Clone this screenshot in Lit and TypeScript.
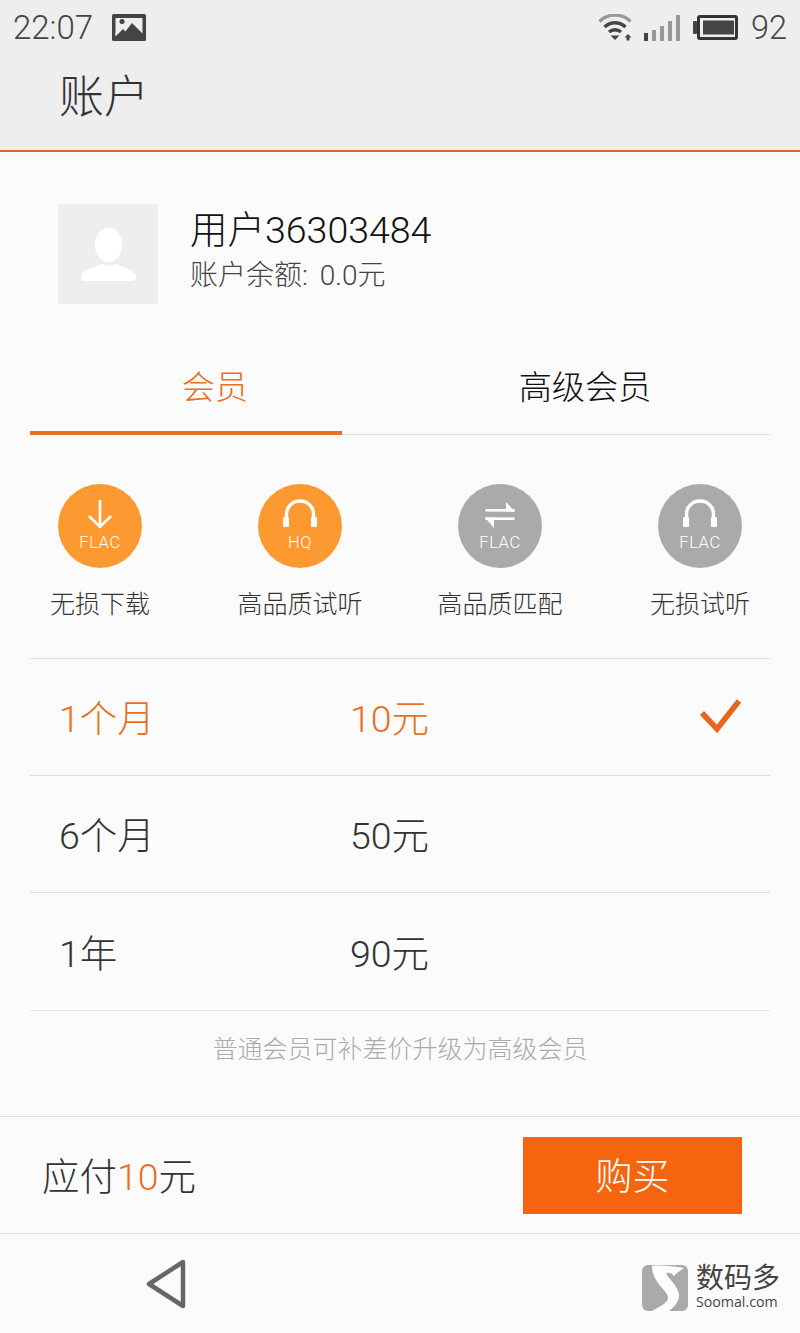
import { LitElement, html, css } from "lit";
import { customElement } from "lit/decorators.js";

const headphones = html`<svg class="glyph" width="36" height="30" viewBox="0 0 36 30">
  <path d="M4.5 22V15a13.5 13 0 0 1 27 0v7" fill="none" stroke="#fff" stroke-width="3.4"/>
  <rect x="1" y="18" width="6" height="10" rx="1" fill="#fff"/>
  <rect x="29" y="18" width="6" height="10" rx="1" fill="#fff"/>
</svg>`;
const arrow = html`<svg class="glyph" width="36" height="30" viewBox="0 0 36 30">
  <path d="M18 1v27M7 17l11 11 11-11" fill="none" stroke="#fff" stroke-width="2.6"/>
</svg>`;
const swap = html`<svg class="glyph" width="36" height="30" viewBox="0 0 36 30">
  <rect x="3.5" y="10" width="29" height="2.6" fill="#fff"/>
  <path d="M24 3l9 9.600h-9z" fill="#fff"/>
  <rect x="3.5" y="18.400" width="29" height="2.6" fill="#fff"/>
  <path d="M12 29L3 18.400h9z" fill="#fff"/>
</svg>`;

const features = [
  { icon: arrow, tag: "FLAC", label: "无损下载", on: true },
  { icon: headphones, tag: "HQ", label: "高品质试听", on: true },
  { icon: swap, tag: "FLAC", label: "高品质匹配", on: false },
  { icon: headphones, tag: "FLAC", label: "无损试听", on: false },
];
const plans = [
  { term: "1个月", price: "10元", on: true },
  { term: "6个月", price: "50元", on: false },
  { term: "1年", price: "90元", on: false },
];

@customElement("app-root")
export class AppRoot extends LitElement {
  static styles = css`
    :host {
      display: flex;
      flex-direction: column;
      width: 800px;
      height: 1333px;
      overflow: hidden;
      background: #fbfbfb;
      color: #333;
      font-family: Roboto, "Noto Sans CJK SC", sans-serif;
      font-weight: 300;
    }
    .top { background: #eeeeee; height: 150px; border-bottom: 2px solid #d9692f; flex: none; }
    .status { height: 52px; box-sizing: border-box; display: flex; align-items: center; padding: 3px 13px 0 13px; }
    .clock { font-size: 33px; color: #444; width: 99px; }
    .spacer { flex: 1; }
    .status svg { display: block; }
    .wifi { margin-right: 11px; }
    .bars { margin-right: 12px; }
    .batt { margin-right: 13px; }
    .level { font-size: 32.5px; color: #444; }
    .title { font-size: 45px; line-height: 50px; padding: 0 0 0 59px; color: #333; margin-top: 21px; }

    .main { flex: 1; padding: 0 30px; }
    .profile { display: flex; align-items: center; padding: 52px 0 0 28px; }
    .avatar { width: 100px; height: 100px; flex: none; margin-right: 32px; display: block; }
    .info { margin-top: -7px; }
    .name { font-size: 37.5px; line-height: 44px; color: #111; }
    .balance { font-size: 28px; line-height: 36px; color: #444; margin-top: 6px; word-spacing: 5px; }

    .tabs { display: grid; grid-template-columns: 1fr 1fr; margin-top: 46px; height: 85px; border-bottom: 1px solid #ddd; box-sizing: border-box; position: relative; }
    .tab { display: flex; align-items: center; justify-content: center; font-size: 33.2px; color: #111; padding-bottom: 15px; }
    .tab.on { color: #e8701f; }
    .tab.on::after { content: ""; position: absolute; left: 0; bottom: -1px; width: 312px; height: 4px; background: #e8701f; }

    .features { display: grid; grid-template-columns: repeat(4, 200px); margin: 49px 0 0 -30px; padding-bottom: 35px; }
    .feature { display: flex; flex-direction: column; align-items: center; }
    .circle { width: 84px; height: 84px; border-radius: 50%; background: #aaaaaa; display: flex; flex-direction: column; align-items: center; padding-top: 15px; box-sizing: border-box; }
    .circle.on { background: #fc9a31; }
    .glyph { display: block; }
    .tag { color: #fff; font-size: 16.5px; line-height: 16px; letter-spacing: 0.6px; margin-top: 6px; }
    .label { font-size: 25px; line-height: 36px; margin-top: 19px; color: #333; white-space: nowrap; }

    .plan { display: flex; align-items: center; height: 117px; box-sizing: border-box; border-top: 1px solid #dedede; padding: 0 0 3px 29px; font-size: 37.5px; color: #333; }
    .plan.last { border-bottom: 1px solid #e6e6e6; height: 119px; }
    .plan.on { color: #e8701f; }
    .term { width: 291px; }
    .plan svg { margin-left: auto; margin-right: 27px; display: block; }
    .note { text-align: center; font-size: 25px; color: #aaa; line-height: 36px; margin-top: 21px; }

    .pay { flex: none; height: 117px; box-sizing: border-box; border-top: 1px solid #ddd; display: flex; align-items: center; justify-content: space-between; padding: 0 58px 0 42px; background: #fbfbfb; }
    .due { font-size: 37.5px; color: #333; margin-top: -3px; }
    .due b { font-weight: 300; color: #e8701f; }
    .buy { width: 219px; height: 77px; background: #f5640f; color: #fff; font-size: 37px; display: flex; align-items: center; justify-content: center; padding-bottom: 2px; box-sizing: border-box; }

    .nav { flex: none; height: 100px; box-sizing: border-box; border-top: 1px solid #ddd; display: flex; background: #fbfbfb; padding: 25px 20px 0 144px; }
    .nav svg { display: block; }
    .brand { margin-left: auto; display: flex; gap: 8px; padding-top: 6px; }
    .brand-text { display: flex; flex-direction: column; }
    .cn { font-size: 28px; line-height: 28px; color: #444; font-weight: 400; }
    .en { font-size: 14.2px; line-height: 16px; color: #444; font-family: "Open Sans", sans-serif; font-weight: 400; margin-top: 1px; }
  `;

  render() {
    return html`
      <div class="top">
        <div class="status">
          <span class="clock">22:07</span>
          <svg width="34" height="27" viewBox="0 0 34 27">
            <rect width="34" height="27" rx="1.500" fill="#444"/>
            <rect x="3.500" y="4" width="27" height="18" fill="#eee"/>
            <circle cx="10" cy="7.500" r="2.500" fill="#444"/>
            <path d="M3 23l8-8 2.400 2.400L20 9l11 11v6H3z" fill="#444"/>
            <path d="M3.500 20l6.500-6" stroke="#eee" stroke-width="1.500"/>
          </svg>
          <span class="spacer"></span>
          <svg class="wifi" width="35" height="28" viewBox="0 0 35 28">
            <path d="M1.500 7.500a22 22 0 0 1 31 0" fill="none" stroke="#999" stroke-width="3.400"/>
            <path d="M6.500 13a15 15 0 0 1 21 0" fill="none" stroke="#444" stroke-width="3.400"/>
            <path d="M11 18a9 9 0 0 1 12 0" fill="none" stroke="#444" stroke-width="3.400"/>
            <path d="M12.500 21.500h9l-4.500 4.500z" fill="#444"/>
            <path d="M30 20l3.500 3.500h-2v3h-3v-3h-2z" fill="#444"/>
          </svg>
          <svg class="bars" width="37" height="26" viewBox="0 0 37 26">
            <rect x="0" y="18" width="4" height="8" fill="#444"/>
            <rect x="8" y="15" width="4" height="11" fill="#999"/>
            <rect x="16" y="11" width="4" height="15" fill="#999"/>
            <rect x="24" y="6" width="4" height="20" fill="#999"/>
            <rect x="32" y="0" width="4" height="26" fill="#999"/>
          </svg>
          <svg class="batt" width="45" height="25" viewBox="0 0 45 25">
            <rect x="0" y="6" width="4" height="13" rx="1" fill="#444"/>
            <rect x="5.500" y="1.500" width="38" height="22" rx="1.500" fill="#eee" stroke="#333" stroke-width="3"/>
            <rect x="10" y="5.500" width="31" height="14" fill="#444"/>
          </svg>
          <span class="level">92</span>
        </div>
        <div class="title">账户</div>
      </div>

      <div class="main">
        <div class="profile">
          <svg class="avatar" viewBox="0 0 100 100">
            <rect width="100" height="100" fill="#eeeeee"/>
            <ellipse cx="50.500" cy="41" rx="13.500" ry="17.500" fill="#fff"/>
            <path d="M23 73c0-7 14-10 20-13l7.500 2 7.500-2c6 3 20 6 20 13 0 3-2 4-4 4H27c-2 0-4-1-4-4z" fill="#fff"/>
          </svg>
          <div class="info">
            <div class="name">用户36303484</div>
            <div class="balance">账户余额: 0.0元</div>
          </div>
        </div>

        <div class="tabs">
          <div class="tab on">会员</div>
          <div class="tab">高级会员</div>
        </div>

        <div class="features">
          ${features.map(
            (f) => html`<div class="feature">
              <div class="circle ${f.on ? "on" : ""}">${f.icon}<span class="tag">${f.tag}</span></div>
              <div class="label">${f.label}</div>
            </div>`
          )}
        </div>

        ${plans.map(
          (p, i) => html`<div class="plan ${p.on ? "on" : ""} ${i === plans.length - 1 ? "last" : ""}">
            <span class="term">${p.term}</span><span>${p.price}</span>
            ${p.on
              ? html`<svg width="44" height="36" viewBox="0 0 44 36"><path d="M3 15l15 16L40 3" fill="none" stroke="#e8651c" stroke-width="5.500"/></svg>`
              : ""}
          </div>`
        )}
        <div class="note">普通会员可补差价升级为高级会员</div>
      </div>

      <div class="pay">
        <span class="due">应付<b>10</b>元</span>
        <div class="buy">购买</div>
      </div>

      <div class="nav">
        <svg width="44" height="50" viewBox="0 0 44 50">
          <path d="M39 3L5 25l34 22z" fill="none" stroke="#666" stroke-width="4.500" stroke-linejoin="round"/>
        </svg>
        <div class="brand">
          <svg width="46" height="46" viewBox="0 0 46 46">
            <rect width="46" height="46" rx="6" fill="#aaa"/>
            <path d="M10 1C16 0 30 1 42 3 38 6 34 8 32 11 30 8 27 7 24 8 26 14 38 22 37 32 36 38 31 43 27 46H10C17 42 26 38 26 33 26 25 10 18 10 1z" fill="#fff"/>
          </svg>
          <div class="brand-text">
            <span class="cn">数码多</span>
            <span class="en">Soomal.com</span>
          </div>
        </div>
      </div>
    `;
  }
}
